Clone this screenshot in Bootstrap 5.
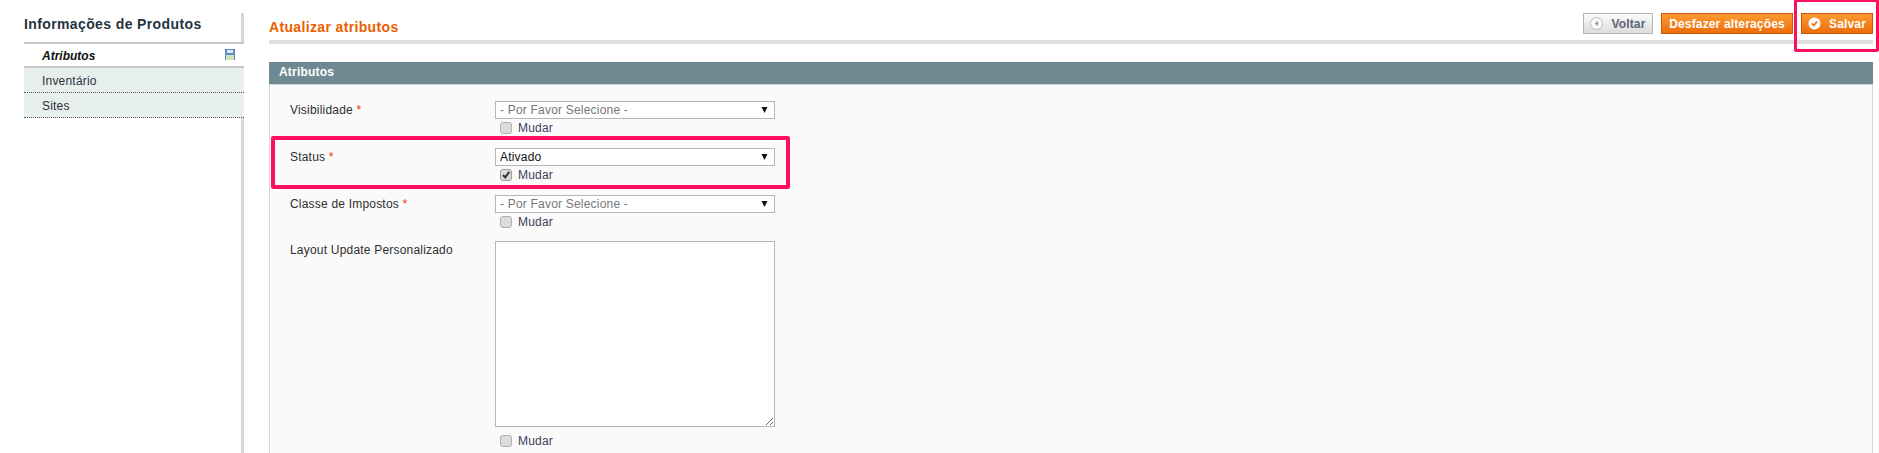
<!DOCTYPE html>
<html lang="pt">
<head>
<meta charset="utf-8">
<title>Atualizar atributos</title>
<link href="https://cdn.jsdelivr.net/npm/bootstrap@5.3.0/dist/css/bootstrap.min.css" rel="stylesheet">
<style>
html,body{height:453px;overflow:hidden;background:#fff}
body{font-family:"Liberation Sans",Arial,sans-serif;font-size:12px;color:#2f2f2f;line-height:15px;position:relative;letter-spacing:.2px}
.shell{padding:13px 6px 0 24px;height:453px;overflow:hidden}
.sidebar{width:220px;flex:none;border-right:3px solid #d6d6d6;margin-right:25px;height:440px}
.side-title{font-size:14px;font-weight:700;line-height:18px;color:#253240;height:31px;padding-top:2px;border-bottom:2px solid #c6c6c6;letter-spacing:.38px;margin-right:-3px}
.side-item{height:25px;padding:6px 0 0 18px;color:#2f2f3f;background:#e7efed;border-bottom:1px dotted #555;margin-right:-3px}
.side-item.current{height:24px;background:#fff;color:#111;font-style:italic;font-weight:700;border-bottom:2px solid #c6c6c6;padding:5px 9px 0 18px;justify-content:space-between;letter-spacing:0}
.main-col{flex:1;min-width:0}
.head-row{height:31px;border-bottom:4px solid #dedede;padding-bottom:6px;margin-bottom:18px}
.head-title{font-size:14px;font-weight:700;color:#eb5e00;margin:5px 0 0;line-height:18px;letter-spacing:.35px}
.act{height:21px;padding:0 7px;font-size:12px;font-weight:700;line-height:18px;border-radius:0;letter-spacing:.15px}
.act-grey,.act-grey:hover{width:70px;color:#5a6478;background:linear-gradient(#fbfbfb,#dcdcdc);border:1px solid #b6b6b6}
.act-orange,.act-orange:hover{color:#fff;background:linear-gradient(#fd9a30,#ec6d0b);border:1px solid #c8590b}
.act-undo{width:132px;margin:0 8px}
.act-save{width:72px}
.act svg{flex:none}
.panel-head{height:22px;background:#6f8992;color:#fff;font-weight:700;padding:3px 0 0 10px}
.panel-body{background:#fafafa;border:1px solid #d6d6d6;height:400px;padding:16px 0 0 0}
.f-row{height:47px}
.f-row-short{height:46px}
.field-label{width:225px;padding:2px 0 0 20px;flex:none}
.req{color:#eb340a}
.field-ctl{width:280px}
.pick.form-select{height:18px;min-height:18px;padding:0 0 0 4px;font-size:12px;line-height:15px;border:1px solid #b6b6b6;border-radius:0;color:#777;font-family:inherit;letter-spacing:.2px;background-color:#fff;background-size:7px 6px;background-position:right 6px center;background-image:url("data:image/svg+xml,%3Csvg xmlns='http://www.w3.org/2000/svg' viewBox='0 0 7 6'%3E%3Cpath d='M.5 0h6L3.500 6z' fill='%23111'/%3E%3C/svg%3E")}
.pick.on{color:#111}
.free-text.form-control{height:186px;border:1px solid #b6b6b6;border-radius:0;padding:2px;font-size:12px;display:block;min-height:0}
.tick-row{height:14px;padding-left:5px;margin-top:2px;color:#3b3f58;gap:6px;align-items:center}
.tick-last{margin-top:7px}
.tick.form-check-input{width:12px;height:12px;margin:0;background-color:#dcdcdc;border:1px solid #b0b0b0;border-radius:3px;float:none}
.tick.form-check-input:checked{background-color:#dcdcdc;border-color:#9a9a9a;background-size:10px 10px;background-image:url("data:image/svg+xml,%3Csvg xmlns='http://www.w3.org/2000/svg' viewBox='0 0 10 10'%3E%3Cpath d='M2 5l2.2 2.4L8.3 1.8' fill='none' stroke='%23333' stroke-width='2'/%3E%3C/svg%3E")}
.mark-box{position:absolute;border:4px solid #fe0f5c;border-radius:2px}
.mark-a{left:271px;top:136px;width:519px;height:53px}
.mark-b{left:1794px;top:-1px;width:85px;height:53px;border-width:3px}
</style>
</head>
<body>
<div class="shell d-flex">
  <aside class="sidebar">
    <div class="side-title">Informações de Produtos</div>
    <div class="side-item current d-flex"><span>Atributos</span>
      <svg width="10" height="11" viewBox="0 0 10 11"><rect width="10" height="11" fill="#5b8cc4"/><rect x="2" y="1" width="6" height="3" fill="#dce8f5"/><rect x="1" y="6" width="8" height="5" fill="#cfe3b8"/></svg>
    </div>
    <div class="side-item">Inventário</div>
    <div class="side-item">Sites</div>
  </aside>
  <main class="main-col">
    <div class="head-row d-flex justify-content-between align-items-start">
      <h3 class="head-title">Atualizar atributos</h3>
      <div class="d-flex">
        <button type="button" class="btn act act-grey d-flex align-items-center justify-content-center gap-2">
          <svg width="13" height="13" viewBox="0 0 13 13"><circle cx="6.5" cy="6.5" r="6" fill="#fafafa" stroke="#bbb"/><path d="M8 4v5L4.5 6.500z" fill="#999"/></svg>Voltar</button>
        <button type="button" class="btn act act-orange act-undo">Desfazer alterações</button>
        <button type="button" class="btn act act-orange act-save d-flex align-items-center justify-content-center gap-2">
          <svg width="13" height="13" viewBox="0 0 13 13"><circle cx="6.500" cy="6.500" r="6" fill="#fff"/><path d="M4 6.500l2 2 3-4" fill="none" stroke="#e8771a" stroke-width="1.800"/></svg>Salvar</button>
      </div>
    </div>
    <section>
      <div class="panel-head">Atributos</div>
      <div class="panel-body">
        <div class="d-flex f-row">
          <div class="field-label">Visibilidade <span class="req">*</span></div>
          <div class="field-ctl">
            <select class="form-select pick"><option>- Por Favor Selecione -</option></select>
            <label class="d-flex tick-row"><input class="form-check-input tick" type="checkbox">Mudar</label>
          </div>
        </div>
        <div class="d-flex f-row">
          <div class="field-label">Status <span class="req">*</span></div>
          <div class="field-ctl">
            <select class="form-select pick on"><option>Ativado</option></select>
            <label class="d-flex tick-row"><input class="form-check-input tick" type="checkbox" checked>Mudar</label>
          </div>
        </div>
        <div class="d-flex f-row f-row-short">
          <div class="field-label">Classe de Impostos <span class="req">*</span></div>
          <div class="field-ctl">
            <select class="form-select pick"><option>- Por Favor Selecione -</option></select>
            <label class="d-flex tick-row"><input class="form-check-input tick" type="checkbox">Mudar</label>
          </div>
        </div>
        <div class="d-flex">
          <div class="field-label">Layout Update Personalizado</div>
          <div class="field-ctl">
            <textarea class="form-control free-text"></textarea>
            <label class="d-flex tick-row tick-last"><input class="form-check-input tick" type="checkbox">Mudar</label>
          </div>
        </div>
      </div>
    </section>
  </main>
</div>
<div class="mark-box mark-a"></div>
<div class="mark-box mark-b"></div>
</body>
</html>
